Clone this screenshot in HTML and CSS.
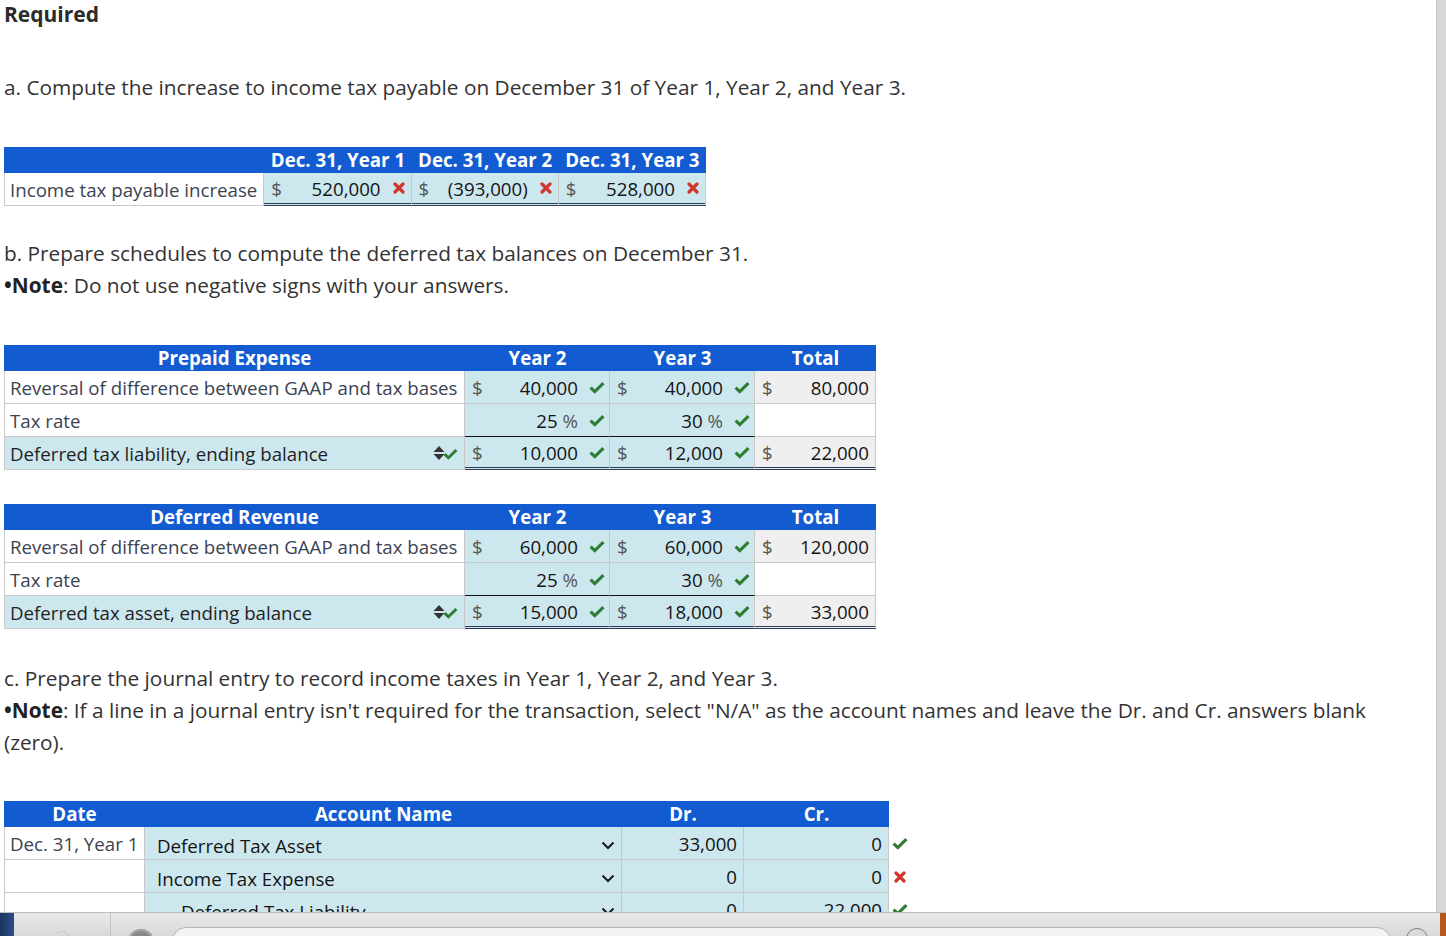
FILE: index.html
```html
<!DOCTYPE html>
<html lang="en">
<head>
<meta charset="utf-8">
<title>Required</title>
<link rel="stylesheet" href="styles.css">
</head>
<body>
<svg class="defs" width="0" height="0" aria-hidden="true">
  <defs>
    <symbol id="chk" viewBox="0 0 16 13"><path d="M1.6 6.6 L5.8 10.6 L14.4 2.2" fill="none" stroke="#2f7d32" stroke-width="3.2" stroke-linejoin="miter"/></symbol>
    <symbol id="xx" viewBox="0 0 12 12"><path d="M2 2 L10 10 M10 2 L2 10" fill="none" stroke="#d2372d" stroke-width="3.2" stroke-linecap="round"/></symbol>
    <symbol id="sort" viewBox="0 0 12 16"><path d="M6 1 L11.5 7 L0.5 7 Z M6 15 L11.5 9 L0.5 9 Z" fill="#333"/></symbol>
    <symbol id="chev" viewBox="0 0 14 9"><path d="M1.5 1.5 L7 7 L12.5 1.5" fill="none" stroke="#1a1a1a" stroke-width="2"/></symbol>
  </defs>
</svg>
<main class="page">
  <h1 class="req">Required</h1>
  <p class="p pa">a. Compute the increase to income tax payable on December 31 of Year 1, Year 2, and Year 3.</p>

  <table class="tbl ta">
    <colgroup><col class="wa0"><col class="wa1"><col class="wa1"><col class="wa1"></colgroup>
    <tr><th></th><th>Dec. 31, Year 1</th><th>Dec. 31, Year 2</th><th>Dec. 31, Year 3</th></tr>
    <tr>
      <td class="lb first"><div class="c">Income tax payable increase</div></td>
      <td class="in dbl"><div class="c d"><span class="cur">$</span><span class="val">520,000</span><svg class="ix"><use href="#xx"/></svg></div></td>
      <td class="in dbl"><div class="c d"><span class="cur">$</span><span class="val">(393,000)</span><svg class="ix"><use href="#xx"/></svg></div></td>
      <td class="in dbl"><div class="c d"><span class="cur">$</span><span class="val">528,000</span><svg class="ix"><use href="#xx"/></svg></div></td>
    </tr>
  </table>

  <p class="p pb">b. Prepare schedules to compute the deferred tax balances on December 31.</p>
  <p class="p"><strong>•Note</strong>: Do not use negative signs with your answers.</p>

  <table class="tbl tb tb1">
    <colgroup><col class="wb0"><col class="wb1"><col class="wb1"><col class="wb2"></colgroup>
    <tr><th>Prepaid Expense</th><th>Year 2</th><th>Year 3</th><th>Total</th></tr>
    <tr>
      <td class="lb first"><div class="c">Reversal of difference between GAAP and tax bases</div></td>
      <td class="in"><div class="c d"><span class="cur">$</span><span class="val">40,000</span><svg class="ic"><use href="#chk"/></svg></div></td>
      <td class="in"><div class="c d"><span class="cur">$</span><span class="val">40,000</span><svg class="ic"><use href="#chk"/></svg></div></td>
      <td class="tot"><div class="c d"><span class="cur">$</span><span class="val">80,000</span></div></td>
    </tr>
    <tr>
      <td class="lb first"><div class="c">Tax rate</div></td>
      <td class="in blk"><div class="c d"><span class="val">25 <span class="pct">%</span></span><svg class="ic"><use href="#chk"/></svg></div></td>
      <td class="in blk"><div class="c d"><span class="val">30 <span class="pct">%</span></span><svg class="ic"><use href="#chk"/></svg></div></td>
      <td class="wt"><div class="c"></div></td>
    </tr>
    <tr>
      <td class="lb first hl"><div class="c">Deferred tax liability, ending balance<span class="sorter"><svg class="srt"><use href="#sort"/></svg><svg class="ic2"><use href="#chk"/></svg></span></div></td>
      <td class="in dbl"><div class="c d"><span class="cur">$</span><span class="val">10,000</span><svg class="ic"><use href="#chk"/></svg></div></td>
      <td class="in dbl"><div class="c d"><span class="cur">$</span><span class="val">12,000</span><svg class="ic"><use href="#chk"/></svg></div></td>
      <td class="tot dbl"><div class="c d"><span class="cur">$</span><span class="val">22,000</span></div></td>
    </tr>
  </table>

  <table class="tbl tb tb2">
    <colgroup><col class="wb0"><col class="wb1"><col class="wb1"><col class="wb2"></colgroup>
    <tr><th>Deferred Revenue</th><th>Year 2</th><th>Year 3</th><th>Total</th></tr>
    <tr>
      <td class="lb first"><div class="c">Reversal of difference between GAAP and tax bases</div></td>
      <td class="in"><div class="c d"><span class="cur">$</span><span class="val">60,000</span><svg class="ic"><use href="#chk"/></svg></div></td>
      <td class="in"><div class="c d"><span class="cur">$</span><span class="val">60,000</span><svg class="ic"><use href="#chk"/></svg></div></td>
      <td class="tot"><div class="c d"><span class="cur">$</span><span class="val">120,000</span></div></td>
    </tr>
    <tr>
      <td class="lb first"><div class="c">Tax rate</div></td>
      <td class="in blk"><div class="c d"><span class="val">25 <span class="pct">%</span></span><svg class="ic"><use href="#chk"/></svg></div></td>
      <td class="in blk"><div class="c d"><span class="val">30 <span class="pct">%</span></span><svg class="ic"><use href="#chk"/></svg></div></td>
      <td class="wt"><div class="c"></div></td>
    </tr>
    <tr>
      <td class="lb first hl"><div class="c">Deferred tax asset, ending balance<span class="sorter"><svg class="srt"><use href="#sort"/></svg><svg class="ic2"><use href="#chk"/></svg></span></div></td>
      <td class="in dbl"><div class="c d"><span class="cur">$</span><span class="val">15,000</span><svg class="ic"><use href="#chk"/></svg></div></td>
      <td class="in dbl"><div class="c d"><span class="cur">$</span><span class="val">18,000</span><svg class="ic"><use href="#chk"/></svg></div></td>
      <td class="tot dbl"><div class="c d"><span class="cur">$</span><span class="val">33,000</span></div></td>
    </tr>
  </table>

  <p class="p pc">c. Prepare the journal entry to record income taxes in Year 1, Year 2, and Year 3.</p>
  <p class="p"><strong>•Note</strong>: If a line in a journal entry isn't required for the transaction, select "N/A" as the account names and leave the Dr. and Cr. answers blank (zero).</p>

  <table class="tbl tc">
    <colgroup><col class="wc0"><col class="wc1"><col class="wc2"><col class="wc3"><col class="wc4"></colgroup>
    <tr><th>Date</th><th>Account Name</th><th>Dr.</th><th>Cr.</th><th class="blank"></th></tr>
    <tr>
      <td class="lb first"><div class="c">Dec. 31, Year 1</div></td>
      <td class="in"><div class="c acct"><span class="an">Deferred Tax Asset</span><svg class="chev"><use href="#chev"/></svg></div></td>
      <td class="in"><div class="c d"><span class="val">33,000</span></div></td>
      <td class="in"><div class="c d"><span class="val">0</span></div></td>
      <td class="mark"><div class="c"><svg class="ic"><use href="#chk"/></svg></div></td>
    </tr>
    <tr>
      <td class="lb first"><div class="c"></div></td>
      <td class="in"><div class="c acct"><span class="an">Income Tax Expense</span><svg class="chev"><use href="#chev"/></svg></div></td>
      <td class="in"><div class="c d"><span class="val">0</span></div></td>
      <td class="in"><div class="c d"><span class="val">0</span></div></td>
      <td class="mark"><div class="c"><svg class="ix ixm"><use href="#xx"/></svg></div></td>
    </tr>
    <tr>
      <td class="lb first"><div class="c"></div></td>
      <td class="in"><div class="c acct ind"><span class="an">Deferred Tax Liability</span><svg class="chev"><use href="#chev"/></svg></div></td>
      <td class="in"><div class="c d"><span class="val">0</span></div></td>
      <td class="in"><div class="c d"><span class="val">22,000</span></div></td>
      <td class="mark"><div class="c"><svg class="ic"><use href="#chk"/></svg></div></td>
    </tr>
  </table>
</main>

<div class="scrollbar"></div>
<div class="taskbar">
  <div class="tb-blue"></div>
  <div class="tb-seg"><span class="tb-ghost"></span></div>
  <span class="tb-info"></span>
  <span class="tb-input"></span>
  <span class="tb-circle"></span>
  <span class="tb-orange"></span>
</div>
</body>
</html>
```

FILE: styles.css
```css
html, body {
  margin: 0;
  height: 936px;
  overflow: hidden;
  background: #fff;
}
body {
  font-family: "Open Sans", "DejaVu Sans", sans-serif;
  color: #333;
}
.defs { position: absolute; width: 0; height: 0; }
.page { padding-left: 4px; }

.req {
  margin: 0;
  font-size: 21px;
  line-height: 28px;
  font-weight: 700;
  color: #2b2b2b;
}
.p {
  margin: 0;
  font-size: 20.8px;
  line-height: 32px;
  color: #333;
  padding-right: 40px;
}
.p strong { color: #222; }
.pa { margin-top: 43px; }
.pb { margin-top: 31px; }
.pc { margin-top: 33px; }

/* tables */
.tbl {
  border-collapse: separate;
  border-spacing: 0;
  table-layout: fixed;
  font-size: 18.7px;
}
.ta { width: 702px; margin-top: 44px; }
.tb { width: 872px; }
.tb1 { margin-top: 44px; }
.tb2 { margin-top: 34px; }
.tc { width: 906px; margin-top: 43px; }

.wa0 { width: 260px; }
.wa1 { width: 147px; }
.wb0 { width: 461px; }
.wb1 { width: 145px; }
.wb2 { width: 121px; }
.wc0 { width: 141px; }
.wc1 { width: 477px; }
.wc2 { width: 122px; }
.wc3 { width: 145px; }
.wc4 { width: 21px; }

.tbl th {
  background: #135bd1;
  color: #fff;
  font-weight: 700;
  font-size: 18.7px;
  line-height: 26px;
  height: 26px;
  padding: 0;
  text-align: center;
  white-space: nowrap;
}
.tbl th.blank { background: transparent; }

.tbl td {
  padding: 0;
  border-bottom: 1px solid #c9c9c9;
  border-right: 1px solid #c9c9c9;
  vertical-align: middle;
  white-space: nowrap;
}
.tbl td.first { border-left: 1px solid #c9c9c9; }
.tbl td.mark { border: none; }

.c {
  box-sizing: border-box;
  height: 32px;
  display: flex;
  align-items: center;
  padding: 0 6px 0 5px;
  overflow: hidden;
}
.lb { background: #fff; color: #3b4352; }
.lb.hl { background: #cde7ef; color: #1f1f1f; }
.in { background: #cde7ef; color: #141414; }
.tot { background: #efefef; color: #141414; }
.wt { background: #fff; }

.in.dbl, .tot.dbl { border-bottom: 3px double #2d3b57; }
.in.dbl .c, .tot.dbl .c { height: 30px; }
.in.blk { border-bottom-color: #111; }

.d { padding: 0 6px 0 7px; }
.cur { color: #555; margin-right: auto; }
.val { margin-left: auto; }
.pct { color: #555; }
.ta .d { padding-right: 6px; }
.tb .in .d { padding-right: 4px; }

.ic { width: 16px; height: 13px; margin-left: 11px; flex: none; }
.ix { width: 12px; height: 12px; margin-left: 12px; flex: none; }

.sorter { margin-left: auto; display: flex; align-items: center; padding-right: 0; }
.srt { width: 12px; height: 16px; }
.ic2 { width: 15px; height: 12px; margin-left: -2px; margin-top: 2px; }

.acct { padding: 4px 6px 0 12px; }
.acct.ind { padding-left: 36px; }
.an { color: #141414; }
.chev { width: 14px; height: 9px; margin-left: auto; flex: none; }
.tc .d { padding-right: 6px; }
.mark .c { padding: 0 0 0 3px; }
.mark .ic { margin-left: 0; }
.ixm { margin-left: 2px; }

/* window chrome overlays */
.scrollbar {
  position: fixed;
  top: 0;
  right: 0;
  width: 9px;
  height: 100%;
  background: #d7d7d7;
  border-left: 1px solid #c4c4c4;
  box-shadow: -36px 0 30px -8px rgba(0,0,0,0.025);
}
.taskbar {
  position: fixed;
  left: 0;
  bottom: 0;
  width: 100%;
  height: 23px;
  border-top: 1px solid #bdbdbd;
  background: linear-gradient(#e9e9e9, #d9d9d9);
  display: flex;
  align-items: flex-start;
  overflow: hidden;
  z-index: 5;
}
.tb-blue {
  width: 14px;
  height: 100%;
  background: linear-gradient(90deg, #1b355f, #2a5088);
}
.tb-seg {
  width: 96px;
  height: 100%;
  border-right: 1px solid #c2c2c2;
  display: flex;
  justify-content: center;
}
.tb-ghost {
  width: 14px;
  height: 14px;
  margin-top: 18px;
  border-radius: 50%;
  border: 1px solid #c9c9c9;
}
.tb-info {
  width: 26px;
  height: 26px;
  margin: 16px 0 0 17px;
  border-radius: 50%;
  background: #8a8a8a;
  box-shadow: inset 0 0 0 2px #a8a8a8;
}
.tb-input {
  flex: 0 0 1217px;
  height: 30px;
  margin: 14px 0 0 18px;
  border: 1px solid #b3b3b3;
  border-radius: 14px;
  background: #f3f3f3;
}
.tb-circle {
  width: 20px;
  height: 20px;
  margin: 15px 0 0 15px;
  border-radius: 50%;
  border: 1.5px solid #7d7d7d;
}
.tb-orange {
  margin-left: auto;
  width: 6px;
  height: 100%;
  background: #b4581c;
}
```
